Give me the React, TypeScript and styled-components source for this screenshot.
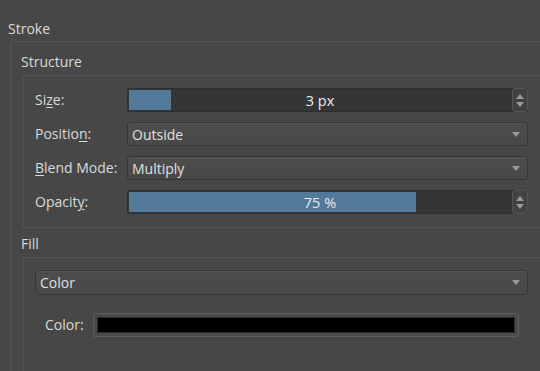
import React from 'react'
import styled, { createGlobalStyle } from 'styled-components'

const GlobalStyle = createGlobalStyle`
  html, body {
    margin: 0;
    padding: 0;
    background: #474747;
    overflow: hidden;
  }
  body {
    font-family: "Open Sans", "Liberation Sans", sans-serif;
    font-size: 14px;
    color: #dadada;
  }
`

const Page = styled.div`
  width: 540px;
  height: 371px;
  padding: 21px 0 0 8px;
  box-sizing: border-box;
  overflow: hidden;
`

const GroupTitle = styled.div<{ $top?: number; $bottom?: number }>`
  height: 16px;
  line-height: 16px;
  margin-top: ${p => p.$top || 0}px;
  margin-bottom: ${p => p.$bottom || 4}px;
`

const GroupBox = styled.div<{ $left: number; $right: number; $open?: boolean }>`
  margin-left: 2px;
  border-top: 1px solid #535353;
  border-left: 1px solid #535353;
  border-bottom: ${p => (p.$open ? 'none' : '1px solid #535353')};
  padding: 12px ${p => p.$right}px ${p => (p.$open ? 0 : 13)}px ${p => p.$left}px;
  min-height: ${p => (p.$open ? '200px' : 'auto')};
`

const Rows = styled.div`
  display: grid;
  grid-template-columns: 92px 1fr;
  grid-auto-rows: 24px;
  row-gap: 10px;
  align-items: center;
`

const Label = styled.div`
  line-height: 16px;
  white-space: nowrap;
`

const Mnemonic = styled.span`
  text-decoration: underline;
  text-underline-offset: 2px;
`

const Spin = styled.div`
  display: flex;
  height: 24px;
  background: #353535;
  border: 1px solid #2e2e2e;
  border-radius: 2px;
  box-sizing: border-box;
`

const Track = styled.div`
  position: relative;
  flex: 1;
  padding: 1px 0 1px 1px;
`

const Bar = styled.div`
  height: 100%;
  background: #52789a;
`

const BarText = styled.div`
  position: absolute;
  inset: 0;
  display: flex;
  align-items: center;
  justify-content: center;
  color: #ececec;
  font-size: 14.5px;
`

const Stepper = styled.div`
  width: 14px;
  margin: -1px -1px -1px 0;
  background: #424242;
  border: 1px solid #555;
  border-radius: 3px;
  display: flex;
  flex-direction: column;
  align-items: center;
  justify-content: center;
  gap: 3px;
`

const Combo = styled.div<{ $h?: number }>`
  display: flex;
  align-items: center;
  justify-content: space-between;
  height: ${p => p.$h || 24}px;
  box-sizing: border-box;
  padding: 0 7px 0 4px;
  background: linear-gradient(#4e4e4e, #484848);
  border: 1px solid #363636;
  border-radius: 3px;
  box-shadow: inset 0 1px 0 #555;
  color: #e0e0e0;
`

const ColorRow = styled.div`
  display: flex;
  align-items: center;
  gap: 9px;
  margin: 18px 9px 0 10px;
`

const Swatch = styled.div`
  flex: 1;
  height: 24px;
  box-sizing: border-box;
  padding: 3px;
  background: #4a4a4a;
  border: 1px solid #5d5d5d;
  border-radius: 2px;
`

const SwatchColor = styled.div`
  height: 100%;
  background: #000;
  border: 1px solid #2a2a2a;
  box-sizing: border-box;
`

const Arrow = ({ up }: { up?: boolean }) => (
  <svg width="8" height="5" viewBox="0 0 8 5">
    <path d={up ? 'M0 5 L4 0 L8 5 Z' : 'M0 0 L8 0 L4 5 Z'} fill="#9a9a9a" />
  </svg>
)

const SpinBox = ({ value, ratio }: { value: string; ratio: number }) => (
  <Spin>
    <Track>
      <Bar style={{ width: `${ratio * 100}%` }} />
      <BarText>{value}</BarText>
    </Track>
    <Stepper>
      <Arrow up />
      <Arrow />
    </Stepper>
  </Spin>
)

const ComboBox = ({ value, h }: { value: string; h?: number }) => (
  <Combo $h={h}>
    <span>{value}</span>
    <Arrow />
  </Combo>
)

const App = () => {
  return (
    <Page>
      <GlobalStyle />
      <GroupTitle>Stroke</GroupTitle>
      <GroupBox $left={10} $right={0} $open>
        <GroupTitle $bottom={5}>Structure</GroupTitle>
        <GroupBox $left={11} $right={12}>
          <Rows>
            <Label>Si<Mnemonic>z</Mnemonic>e:</Label>
            <SpinBox value="3 px" ratio={0.11} />
            <Label>Positio<Mnemonic>n</Mnemonic>:</Label>
            <ComboBox value="Outside" />
            <Label><Mnemonic>B</Mnemonic>lend Mode:</Label>
            <ComboBox value="Multiply" />
            <Label>Opacit<Mnemonic>y</Mnemonic>:</Label>
            <SpinBox value="75 %" ratio={0.75} />
          </Rows>
        </GroupBox>
        <GroupTitle $top={8} $bottom={5}>Fill</GroupTitle>
        <GroupBox $left={11} $right={12} $open>
          <ComboBox value="Color" h={25} />
          <ColorRow>
            <Label>Color:</Label>
            <Swatch>
              <SwatchColor />
            </Swatch>
          </ColorRow>
        </GroupBox>
      </GroupBox>
    </Page>
  )
}

export default App
